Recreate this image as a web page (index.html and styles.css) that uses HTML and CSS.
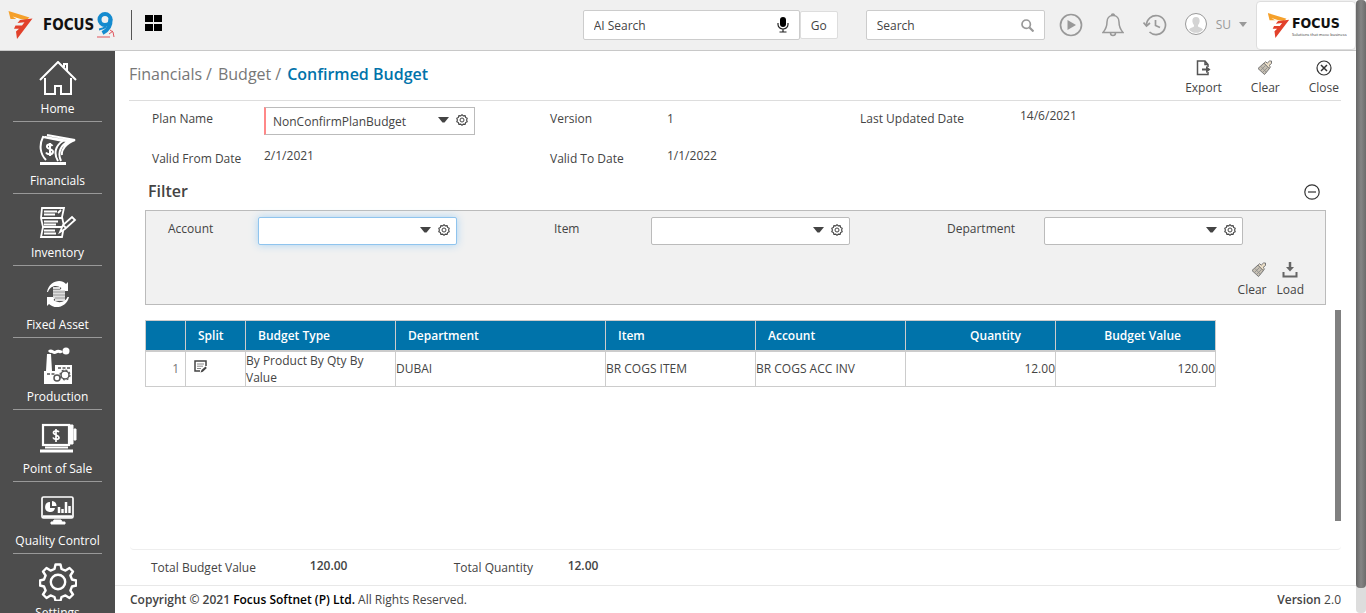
FILE: index.html
```html
<!DOCTYPE html>
<html lang="en">
<head>
<meta charset="utf-8">
<title>Confirmed Budget</title>
<link rel="stylesheet" href="styles.css">
</head>
<body>
<svg class="defs" aria-hidden="true">
  <symbol id="gear" viewBox="0 0 12 12"><path d="M6 .7l1.300 1.200 1.800-.2.500 1.700 1.600.9L10.600 6l.6 1.700-1.600.9-.5 1.700-1.800-.2L6 11.300l-1.300-1.200-1.800.2-.5-1.700-1.600-.9L1.400 6 .8 4.300l1.600-.9.500-1.700 1.800.2z" fill="none" stroke="#444" stroke-width="1.100"/><circle cx="6" cy="6" r="2" fill="none" stroke="#444"/></symbol>
  <symbol id="arrow" viewBox="0 0 11 6"><path d="M0 0h11L6.500 5.500h-2z" fill="#444"/></symbol>
  <symbol id="brush" viewBox="0 0 16 16"><path d="M1 8.500L7 3l5.500 5.500-5 6z" fill="#c6bfb2" stroke="#777"/><path d="M7 3.200l1.700-1.500 1.500 1.500L12.500 1h2v2.500L12 5.500l1.500 1.300-1.300 1.700z" fill="#ecdfc8" stroke="#777"/><path d="M3.500 10.500l5-5M5.500 12.500l5-5M4 6.500l5.500 6" stroke="#8a8a8a" stroke-width=".8"/></symbol>
  <symbol id="mark" viewBox="0 0 24 28"><path d="M0 0L21 6.500 18 9 12 8 2 8z" fill="#f5a02a"/><path d="M4 5.500l8 2.500-3 .8z" fill="#fff"/><path d="M24 7.500L8.500 28 7.500 20.500l3-2.800H5.500L7 14.500h6.500l2.500-3.300-7 .8 2.500-3z" fill="#e2412b"/></symbol>
</svg>
<div class="window">
<div class="app">
  <header class="topbar">
    <a class="logo" href="#" aria-label="Focus 9">
      <svg class="mark" width="25" height="28"><use href="#mark"/></svg>
      <span class="word">FOCUS</span>
      <svg class="nine" width="20" height="28" viewBox="0 0 20 28"><circle cx="9" cy="8.500" r="5.500" fill="none" stroke="#158bcf" stroke-width="4"/><path d="M14.500 8c.5 6-2 11-8 14" fill="none" stroke="#158bcf" stroke-width="4"/><path d="M3 18.500c3-.3 5-1 7-3" fill="none" stroke="#158bcf" stroke-width="2"/><path d="M14 19l3 2 1 5M13 23l4-3M1 26h13" fill="none" stroke="#e0555d" stroke-width="1"/></svg>
    </a>
    <span class="rule"></span>
    <button class="apps" aria-label="Applications"><svg width="17" height="16" viewBox="0 0 17 16"><path d="M0 0h8v7H0zM9 0h8v7H9zM0 9h8v7H0zM9 9h8v7H9z"/></svg></button>
    <form class="ai">
      <label class="field"><input type="text" placeholder="AI Search" aria-label="AI Search">
        <svg width="12" height="16" viewBox="0 0 12 16"><rect x="3" y="0" width="6" height="10" rx="3"/><path d="M1 6v1.500a5 4.500 0 0 0 10 0V6M6 12v3M2.500 15h7" fill="none" stroke="#222" stroke-width="1.200"/></svg></label>
      <button type="button" class="go">Go</button>
    </form>
    <label class="field search"><input type="text" placeholder="Search" aria-label="Search">
      <svg width="13" height="13" viewBox="0 0 13 13" fill="none" stroke="#999" stroke-width="1.700"><circle cx="5.200" cy="5.200" r="4.200"/><path d="M8.500 8.500l4 4" stroke-width="2.200"/></svg></label>
    <div class="tools">
      <button aria-label="Run"><svg width="24" height="24" viewBox="0 0 24 24"><circle cx="12" cy="12" r="10.500" fill="none" stroke="#999" stroke-width="1.700"/><path d="M8.500 7v10l8.500-5z" fill="#999"/></svg></button>
      <button aria-label="Notifications"><svg width="22" height="24" viewBox="0 0 22 24" fill="none" stroke="#999" stroke-width="1.500"><path d="M11 2.500c-4 0-6 3-6 6.500 0 5-1 7-4 10.500h20C18 16 17 14 17 9c0-3.500-2-6.500-6-6.500zM9.500 2.500a1.500 1.500 0 0 1 3 0M8.500 20a2.500 2.500 0 0 0 5 0"/></svg></button>
      <button aria-label="History"><svg width="24" height="24" viewBox="0 0 24 24" fill="none" stroke="#999" stroke-width="1.700"><path d="M3.500 12.500a9.500 9.500 0 1 1 3 6.500"/><path d="M.5 9.500l3 3.500 3.500-3M12.500 7v5.500l4.500 2"/></svg></button>
    </div>
    <button class="user"><svg width="22" height="22" viewBox="0 0 22 22"><circle cx="11" cy="11" r="10.500" fill="#fff" stroke="#999"/><path d="M11 4c-3 0-4 2.200-3.500 5 .3 1.500 1 2.500 1.500 3v1.500c-1.500 1-4 1.200-5 3a9 9 0 0 0 14 0c-1-1.800-3.500-2-5-3V12c.5-.5 1.200-1.500 1.500-3C15 6.200 14 4 11 4z" fill="#d4d4d4"/></svg><span>SU</span><svg width="8" height="5" viewBox="0 0 8 5"><path d="M0 0h8L4 5z" fill="#999"/></svg></button>
    <div class="client" role="img" aria-label="Focus">
      <svg class="mark" width="23" height="25" viewBox="0 0 24 28"><use href="#mark"/></svg>
      <div class="stack"><span class="word">FOCUS</span><small>Solutions that move business</small></div>
    </div>
  </header>
  <div class="body">
    <nav class="side">
      <a href="#"><svg width="38" height="36" viewBox="0 0 38 36" fill="none" stroke="#fff" stroke-width="2"><path d="M1 19L19 1l18 18M6 17v16h10v-8h6v8h10V17M25 6V3h3v7"/></svg>Home</a>
      <a href="#"><svg width="38" height="36" viewBox="0 0 38 36" fill="none" stroke="#fff" stroke-width="2"><path d="M7 27C1 21 0 12 4 4l20 4c-7 4-10 12-5 20M6 4l24 4c-8 4-12 11-8 20M8 2l28 5c-9 3-14 10-13 15"/><path d="M1 30.500h26" stroke-width="3"/><path d="M13.500 13c-2-3-6-1.500-5.500 1s6.500 2 6 5-5.500 3-7 .5M11 10v13" stroke-width="2"/></svg>Financials</a>
      <a href="#"><svg width="38" height="36" viewBox="0 0 38 36" fill="none" stroke="#fff" stroke-width="1.800"><path d="M3 3h22l-2 9 2 9-2 11H2l2-10-2-9zM2 13h22M3 22h20"/><path d="M5 6.500h13M5 9.500h11M5 16.500h14M5 19.500h12M5 25.500h11M5 28.500h12M19 8l3-3"/><path d="M21 27l3-7 9-8 3 3-10 9zM24 20l3 3" fill="#4d4d4d"/></svg>Inventory</a>
      <a href="#"><svg width="38" height="36" viewBox="0 0 38 36"><path d="M8 15C10 4 22 1 27 7l2-2v9h-9l2.500-3C17 7 11 9 9 15zM30 20c-2 10-14 13-20 7l-2 2v-9h9l-2.500 3c5.500 4 12 2 14-3z" fill="#fff"/><path d="M14 10h7v3h5v11H16v-3h-2z" fill="#ddd"/><path d="M14 12.500h7M14 15h12M14 18h12M16 21h10" stroke="#888" stroke-width=".8"/></svg>Fixed Asset</a>
      <a href="#"><svg width="38" height="38" viewBox="0 0 38 38"><path d="M5 37V24h2L8 7h4l1 17h3v-6h17v19z" fill="#fff"/><path d="M10 5c3-3 4 2 7 0s4 1 6-1" fill="none" stroke="#fff" stroke-width="3"/><circle cx="27" cy="4" r="3.500" fill="#fff"/><path d="M8 27h8M19 21h12" stroke="#555" stroke-width="1.500" stroke-dasharray="3 1.500"/><g fill="#fff" stroke="#555"><circle cx="18" cy="31" r="3" stroke-width="1.500"/><circle cx="26" cy="28" r="4" stroke-width="1.500"/><circle cx="26" cy="28" r="5" fill="none" stroke-width="1.200" stroke-dasharray="2 1.900"/></g></svg>Production</a>
      <a href="#"><svg width="38" height="36" viewBox="0 0 38 36" fill="none" stroke="#fff"><rect x="4" y="4" width="26" height="20" stroke-width="2.200"/><path d="M30 4h4v19h-4zM35 8h2v11h-2z" fill="#fff"/><path d="M1 30h33" stroke-width="3"/><path d="M6 26.500h23" stroke-width="2"/><path d="M20 11c-2-2-6-1-5.500 1s5.500 2 5.500 4.500-5 2.500-6 0M17 8v13" stroke-width="1.700"/></svg>Point of Sale</a>
      <a href="#"><svg width="38" height="36" viewBox="0 0 38 36" fill="none" stroke="#fff"><rect x="3" y="4" width="31" height="21" rx="1.500" stroke-width="1.700"/><path d="M4 23.500h29" stroke-width="2.500"/><path d="M15 27h7l1 2h3v2H12v-2h2z" fill="#fff"/><path d="M11 9a5 5 0 1 0 5 6h-5zM13 8v5h4.500a5 5 0 0 0-4.500-5z" fill="#fff" stroke="none"/><path d="M20 20v-6M23.500 20v-4M27 20V9M30.500 20v-7" stroke-width="2.500"/></svg>Quality Control</a>
      <a href="#"><svg width="38" height="38" viewBox="0 0 38 38" fill="none" stroke="#fff" stroke-width="2.400"><path d="M16.500 1.500h5l1 4.500 4 1.600 4-2.600 3.500 3.500-2.600 4 1.600 4 4.200 1v5l-4.200 1-1.600 4 2.600 4-3.500 3.500-4-2.600-4 1.600-1 3.700h-5l-1-3.700-4-1.600-4 2.600L4 31.500l2.600-4-1.600-4-4-1v-5l4-1 1.600-4-2.600-4L7.500 5l4 2.600 4-1.600z" stroke-linejoin="round"/><circle cx="19" cy="19" r="7.200"/></svg>Settings</a>
    </nav>
    <main class="content">
      <div class="titlebar">
        <nav class="crumbs"><a href="#">Financials</a><i>/</i><a href="#">Budget</a><i>/</i><strong>Confirmed Budget</strong></nav>
        <div class="actions">
          <button><svg width="16" height="16" viewBox="0 0 16 16" fill="none" stroke="#555" stroke-width="1.500"><path d="M13 7V4.500L10 1H2.500v13.500H13V12M10 1v3.500h3"/><path d="M7 9.500h5" stroke-width="2"/><path d="M11 6l4.500 3.500L11 13z" fill="#555" stroke="none"/></svg>Export</button>
          <button><svg width="16" height="16"><use href="#brush"/></svg>Clear</button>
          <button><svg width="16" height="16" viewBox="0 0 16 16" fill="none" stroke="#333" stroke-width="1.200"><circle cx="8" cy="8" r="7"/><path d="M5 5l6 6M11 5l-6 6" stroke-width="1.500"/></svg>Close</button>
        </div>
      </div>
      <section class="details">
        <label for="plan">Plan Name</label>
        <div class="combo required"><select id="plan"><option>NonConfirmPlanBudget</option></select><svg width="11" height="6"><use href="#arrow"/></svg><button aria-label="Plan settings"><svg width="12" height="12"><use href="#gear"/></svg></button></div>
        <span>Version</span><output>1</output>
        <span>Last Updated Date</span><output class="raised">14/6/2021</output>
        <span>Valid From Date</span><output class="raised">2/1/2021</output>
        <span>Valid To Date</span><output class="raised">1/1/2022</output>
      </section>
      <section class="filter">
        <div class="heading"><h2>Filter</h2><button aria-label="Collapse filter"><svg width="16" height="16" viewBox="0 0 16 16" fill="none" stroke="#333" stroke-width="1.200"><circle cx="8" cy="8" r="7.200"/><path d="M4 8h8"/></svg></button></div>
        <div class="panel">
          <div class="filters">
            <label for="account">Account</label>
            <div class="combo focus"><select id="account"><option></option></select><svg width="11" height="6"><use href="#arrow"/></svg><button aria-label="Account settings"><svg width="12" height="12"><use href="#gear"/></svg></button></div>
            <label for="item">Item</label>
            <div class="combo"><select id="item"><option></option></select><svg width="11" height="6"><use href="#arrow"/></svg><button aria-label="Item settings"><svg width="12" height="12"><use href="#gear"/></svg></button></div>
            <label for="dept">Department</label>
            <div class="combo"><select id="dept"><option></option></select><svg width="11" height="6"><use href="#arrow"/></svg><button aria-label="Department settings"><svg width="12" height="12"><use href="#gear"/></svg></button></div>
          </div>
          <div class="actions">
            <button class="clear"><svg width="16" height="16"><use href="#brush"/></svg>Clear</button>
            <button><svg width="16" height="16" viewBox="0 0 16 16" fill="none" stroke="#666" stroke-width="2"><path d="M1.500 10v4.500h13V10"/><path d="M8 0v6" stroke-width="2.500"/><path d="M4 5h8L8 9.500z" fill="#666" stroke="none"/></svg>Load</button>
          </div>
        </div>
      </section>
      <section class="grid">
        <table>
          <colgroup><col class="c-no"><col class="c-split"><col class="c-mid"><col class="c-dept"><col class="c-mid"><col class="c-mid"><col class="c-mid"><col class="c-value"></colgroup>
          <thead><tr><th></th><th>Split</th><th>Budget Type</th><th>Department</th><th>Item</th><th>Account</th><th class="num">Quantity</th><th class="num">Budget Value</th></tr></thead>
          <tbody><tr><td class="index">1</td><td class="split"><button aria-label="Split row"><svg width="13" height="13" viewBox="0 0 13 13" fill="none" stroke="#444" stroke-width="1.500"><path d="M12 6V1H1v10h5"/><path d="M3 4h7M3 6.200h6M3 8.500h4" stroke="#888" stroke-width="1"/><path d="M6.500 12.500l1-2.500 4-3.500 1.300 1.500-4 3.700z" fill="#444" stroke="none"/></svg></button></td><td>By Product By Qty By Value</td><td>DUBAI</td><td>BR COGS ITEM</td><td>BR COGS ACC INV</td><td class="num">12.00</td><td class="num">120.00</td></tr></tbody>
        </table>
        <div class="thumb"></div>
      </section>
      <section class="totals"><span>Total Budget Value</span><output>120.00</output><span>Total Quantity</span><output>12.00</output></section>
      <footer class="foot"><p><b>Copyright © 2021 <em>Focus Softnet (P) Ltd.</em></b> All Rights Reserved.</p><p><b>Version</b> 2.0</p></footer>
    </main>
  </div>
</div>
<div class="scroll"><div></div></div>
</div>
</body>
</html>
```
FILE: styles.css
```css
* { box-sizing: border-box; }
body, p, h2 { margin: 0; }
body { font: 12px/17px "Open Sans", sans-serif; color: #444; background: #fff; }
button { border: 0; background: none; padding: 0; font: inherit; color: inherit; cursor: pointer; }
input, select { border: 0; background: none; padding: 0; font: inherit; color: inherit; outline: 0; min-width: 0; }
a { color: inherit; text-decoration: none; }
svg { display: block; flex: none; }
.defs { position: absolute; width: 0; height: 0; }

.window { display: flex; height: 100vh; overflow: hidden; }
.app { flex: 1; min-width: 0; display: flex; flex-direction: column; }
.scroll { width: 10px; background: #ddd; border-radius: 4px; }
.scroll div { height: 96%; border-radius: 4px; background: linear-gradient(90deg, #666, #858585 50%, #6c6c6c); }

.topbar { flex: none; display: flex; align-items: center; height: 51px; background: #f0f0f0; border-bottom: 1px solid #c8c8c8; }
.logo { display: flex; align-items: center; padding-left: 8px; color: #111; }
.word { font: bold 15px/20px "Liberation Sans Narrow", "DejaVu Sans Condensed", sans-serif; color: #111; }
.logo .mark { margin-right: 10px; }
.logo .nine { margin-left: 2px; }
.rule { width: 1px; height: 30px; margin: 0 13px 0 15px; background: #555; }
.apps { padding-bottom: 4px; }
.ai { display: flex; align-items: center; margin-left: auto; margin-right: 28px; }
.field { display: flex; align-items: center; width: 217px; height: 30px; padding: 0 10px; background: #fff; border: 1px solid #ccc; border-radius: 2px; }
.field input { flex: 1; }
.field input::placeholder { color: #444; opacity: 1; }
.search { width: 179px; }
.go { width: 38px; height: 28px; background: #fff; border: 1px solid #ddd; border-radius: 2px; }
.tools { display: flex; align-items: center; gap: 19px; margin: 0 18px 0 14px; }
.user { display: flex; align-items: center; gap: 9px; margin-right: 9px; padding-bottom: 2px; color: #999; }
.user svg:last-child { margin-left: -1px; }
.client { display: flex; align-items: center; width: 100px; height: 49px; padding: 0 10px; background: #fff; border: 1px solid #ddd; border-radius: 4px; }
.client .mark { margin-right: 2px; }
.stack { display: flex; flex-direction: column; }
.stack .word { font-size: 14px; line-height: 18px; }
.stack small { font-size: 4px; line-height: 5px; color: #333; white-space: nowrap; }

.body { flex: 1; min-height: 0; display: flex; }
.side { width: 115px; padding: 0 13px; background: #4d4d4d; color: #fff; overflow: hidden; }
.side a { display: flex; flex-direction: column; align-items: center; justify-content: flex-end; height: 72px; padding-bottom: 4px; border-bottom: 1px solid #999; white-space: nowrap; gap: 3px; }
.side a:first-child { height: 71px; }

.content { flex: 1; min-width: 0; display: flex; flex-direction: column; }
.titlebar { display: flex; justify-content: space-between; height: 50px; margin: 0 15px 0 14px; padding-top: 9px; border-bottom: 1px solid #ddd; }
.crumbs { font-size: 16px; line-height: 28px; color: #777; }
.crumbs i { font-style: normal; margin: 0 6px 0 4px; }
.crumbs strong { font-weight: 600; color: #0073aa; }
.actions { display: flex; }
.actions button { display: flex; flex-direction: column; align-items: center; gap: 3px; }
.titlebar .actions { gap: 29px; padding-right: 2px; align-items: flex-start; }

.details { display: grid; grid-template-columns: 112fr 286fr 117fr 193fr 160fr 306fr; grid-template-rows: 34px 46px; align-items: center; padding: 0 30px 0 37px; }
.raised { padding-bottom: 5px; }
.combo { display: flex; align-items: center; width: 211px; height: 28px; padding: 0 6px 0 7px; background: #fff; border: 1px solid #bbb; }
.combo select { flex: 1; appearance: none; height: 26px; }
.combo > svg { margin-bottom: 2px; }
.combo button { margin-left: 7px; padding-bottom: 2px; }
.required { border-left: 2px solid #f88; margin-top: 6px; }
.focus { border-color: #8fc4ee; box-shadow: 0 0 8px #a9d3f3; }

.filter { padding: 0 30px; }
.heading { display: flex; justify-content: space-between; align-items: center; height: 29px; padding: 0 6px 8px 3px; }
.heading h2 { font-size: 16px; font-weight: 600; }
.panel { height: 95px; padding: 6px 21px 0 22px; background: #f1f1f1; border: 1px solid #bbb; }
.filters { display: grid; grid-template-columns: 90fr 296fr 97fr 296fr 97fr 260fr; align-items: center; }
.filters label { padding-bottom: 5px; }
.filters .combo { width: 199px; border-radius: 2px; }
.panel .actions { gap: 10px; justify-content: flex-end; margin-top: 17px; }
.actions .clear { align-items: flex-end; }

.grid { flex: 1; display: flex; justify-content: space-between; align-items: flex-start; margin: 0 15px; padding: 5px 0 28px 15px; border-bottom: 1px solid #eee; border-radius: 4px; }
table { border-collapse: collapse; table-layout: fixed; width: 1071px; margin-top: 10px; }
.c-no { width: 40px; } .c-split { width: 60px; } .c-mid { width: 150px; } .c-dept { width: 210px; } .c-value { width: 160px; }
th, td { border: 1px solid #ccc; padding: 0; text-align: left; }
th { height: 30px; padding: 0 12px; font-weight: 600; color: #fff; background: #0073aa; border-bottom-width: 2px; }
td { height: 35px; }
.num { text-align: right; }
th.num { padding-right: 34px; }
.index { padding-right: 6px; text-align: right; color: #777; }
.split { padding-left: 8px; }
.thumb { width: 6px; align-self: stretch; background: #808080; }
.totals { display: grid; grid-template-columns: 159fr 144fr 114fr 789fr; height: 36px; padding-left: 36px; align-items: center; border-bottom: 1px solid #e8e8e8; }
.totals output { font-weight: 600; padding-bottom: 5px; }
.foot { display: flex; justify-content: space-between; height: 27px; padding: 5px 15px 0; }
.foot b { font-weight: 600; }
.foot em { font-style: normal; color: #000; }
```
